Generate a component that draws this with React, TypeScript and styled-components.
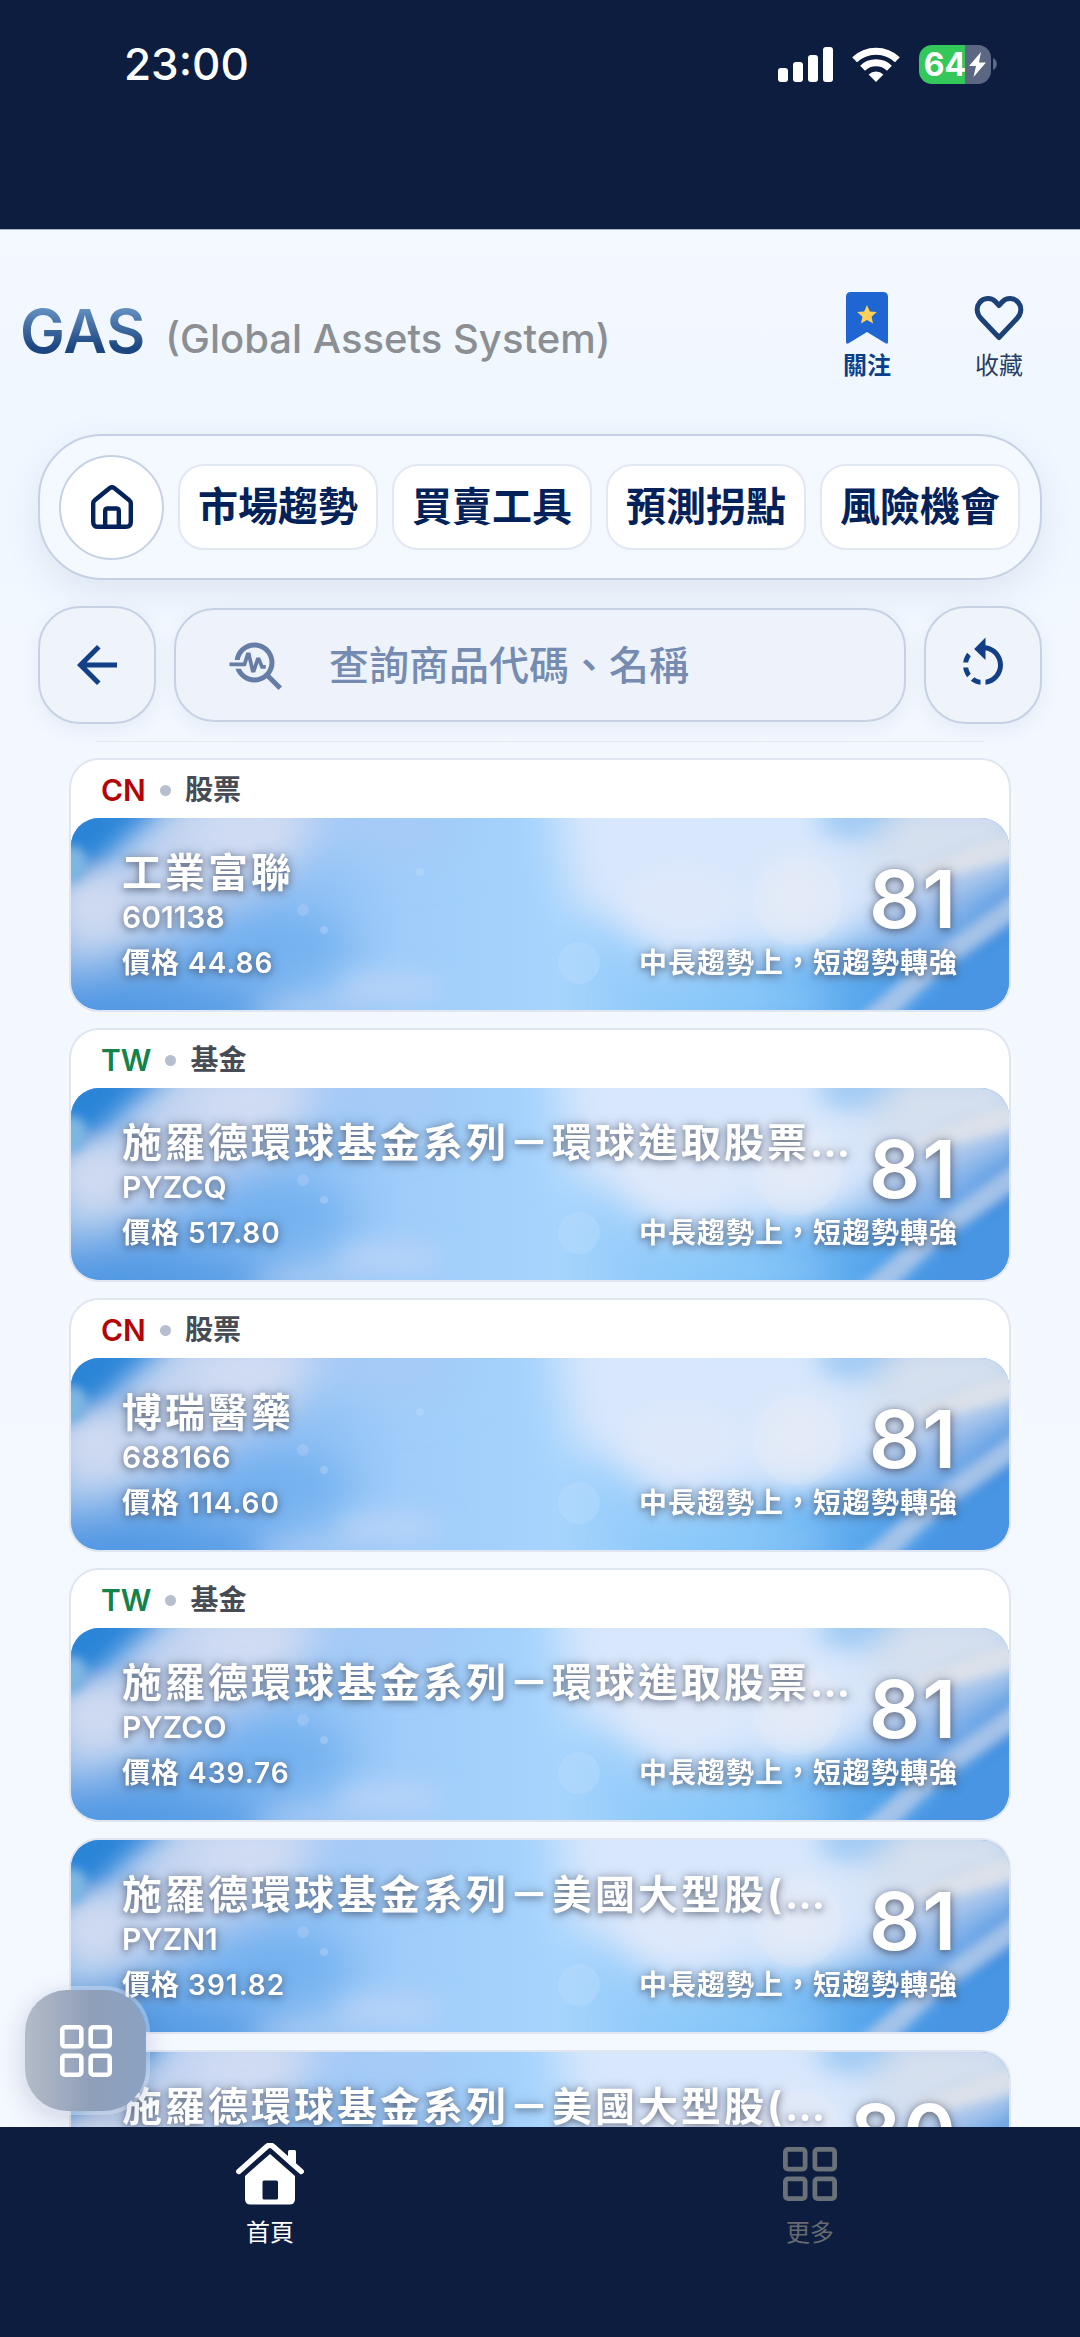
import React from "react";
import styled, { createGlobalStyle } from "styled-components";
import { MdArrowBack, MdRotateLeft, MdTroubleshoot } from "react-icons/md";

const navy = "#0c1d3f";
const ink = "#04225a";
const line = "#c6d1e4";

const GlobalStyle = createGlobalStyle`
  * { box-sizing: border-box; }
  body {
    margin: 0;
    background: ${navy};
    font-family: Inter, "Noto Sans CJK TC", sans-serif;
  }
  button, input { font: inherit; color: inherit; }
  button { padding: 0; border: 0; background: none; cursor: pointer; }
  h1, h2, p, ul { margin: 0; padding: 0; }
  svg { display: block; flex: none; }
`;

const Screen = styled.div`
  display: flex;
  flex-direction: column;
  height: 100vh;
  overflow: hidden;
`;

const StatusBar = styled.div`
  flex: none;
  height: 229px;
  padding: 36px 82px 0 124px;
  display: flex;
  align-items: flex-start;
  justify-content: space-between;
  background: ${navy};
  color: #fff;
`;

const Clock = styled.time`
  font-size: 44px;
  font-weight: 500;
  line-height: 56px;
`;

const StatusIcons = styled.div`
  display: flex;
  align-items: center;
  gap: 19px;
  height: 56px;
`;

const Battery = styled.div`
  display: flex;
  align-items: center;
  gap: 2px;
`;

const BatteryBody = styled.div`
  display: flex;
  align-items: center;
  justify-content: center;
  gap: 3px;
  width: 72px;
  height: 39px;
  border-radius: 13px;
  background: linear-gradient(90deg, #34c759 64%, #5b6783 64%);
  font-size: 32px;
  font-weight: 700;
  line-height: 39px;
`;

const Page = styled.main`
  position: relative;
  flex: 1;
  min-height: 0;
  display: flex;
  flex-direction: column;
  overflow: hidden;
  border-top: 1px solid #a9b3c9;
  background: linear-gradient(180deg, #f4f8ff 0, #f0f7ff 200px, #f3f8ff 520px, #f4f8ff 100%);
`;

const Header = styled.header`
  flex: none;
  display: flex;
  align-items: flex-start;
  justify-content: space-between;
  height: 204px;
  padding: 62px 15px 0 20px;
`;

const Brand = styled.div`
  display: flex;
  align-items: baseline;
  gap: 20px;
  line-height: 78px;
`;

const BrandName = styled.h1`
  font-size: 60px;
  font-weight: 600;
  background: linear-gradient(180deg, #6893c4 14px, #1c4680 56px);
  background-clip: text;
  -webkit-background-clip: text;
  color: transparent;
`;

const BrandNote = styled.p`
  font-size: 40px;
  font-weight: 500;
  color: #8b8f93;
`;

const HeaderActions = styled.div`
  display: flex;
`;

const HeaderAction = styled.button<{ $active?: boolean }>`
  display: flex;
  flex-direction: column;
  align-items: center;
  gap: 8px;
  width: 132px;
  font-size: 24px;
  line-height: 28px;
  font-weight: ${(p) => (p.$active ? 700 : 400)};
  color: ${(p) => (p.$active ? "#0a3f8c" : "#2a3d62")};
`;

const IconSlot = styled.span<{ $size: number }>`
  display: flex;
  align-items: center;
  justify-content: center;
  height: ${(p) => p.$size}px;
`;

const Menu = styled.nav`
  flex: none;
  display: flex;
  align-items: center;
  gap: 14px;
  height: 146px;
  margin: 0 38px 26px;
  padding: 0 20px 0 19px;
  border: 2px solid ${line};
  border-radius: 64px;
  background: #f4f8ff;
  box-shadow: 0 12px 36px rgba(40, 70, 120, 0.1);
`;

const HomeButton = styled.button`
  flex: none;
  display: flex;
  align-items: center;
  justify-content: center;
  width: 105px;
  height: 105px;
  border: 2px solid ${line};
  border-radius: 50%;
  background: #fff;
`;

const MenuChip = styled.button`
  flex: 1;
  min-width: 0;
  height: 86px;
  border: 2px solid #e2e8f3;
  border-radius: 26px;
  background: #fff;
  color: ${ink};
  font-size: 40px;
  font-weight: 700;
  line-height: 60px;
  white-space: nowrap;
`;

const SearchRow = styled.form`
  flex: none;
  display: flex;
  align-items: center;
  gap: 18px;
  margin: 0 38px;
`;

const SquareButton = styled.button`
  flex: none;
  display: flex;
  align-items: center;
  justify-content: center;
  width: 118px;
  height: 118px;
  border: 2px solid ${line};
  border-radius: 42px;
  background: #eff4fb;
  color: #123f85;
  box-shadow: 0 6px 20px rgba(40, 70, 120, 0.07);
`;

const SearchBox = styled.label`
  flex: 1;
  min-width: 0;
  display: flex;
  align-items: center;
  gap: 42px;
  height: 114px;
  padding: 0 51px;
  border: 2px solid ${line};
  border-radius: 40px;
  background: #eef3fb;
  color: #667da5;
  box-shadow: 0 6px 20px rgba(40, 70, 120, 0.07);
`;

const SearchInput = styled.input`
  flex: 1;
  min-width: 0;
  height: 60px;
  padding: 0;
  border: 0;
  outline: 0;
  background: none;
  font-size: 40px;
  font-weight: 500;
  &::placeholder { color: #768bb0; opacity: 1; }
`;

const Rule = styled.hr`
  flex: none;
  width: calc(100% - 190px);
  height: 1px;
  margin: 17px auto 16px;
  border: 0;
  background: #e3e9f3;
`;

const CardList = styled.ul`
  flex: 1;
  min-height: 0;
  display: flex;
  flex-direction: column;
  gap: 16px;
  padding: 0 69px;
  overflow: hidden;
  list-style: none;
`;

const Card = styled.li`
  flex: none;
  border: 2px solid #dfe6f1;
  border-radius: 30px;
  background: #fff;
`;

const CardHead = styled.div`
  display: flex;
  align-items: center;
  gap: 14px;
  height: 58px;
  padding: 2px 30px 0;
  line-height: 36px;
`;

const Market = styled.span<{ $code: string }>`
  font-size: 30px;
  font-weight: 600;
  color: ${(p) => (p.$code === "CN" ? "#b30505" : "#12834a")};
`;

const Dot = styled.span`
  width: 11px;
  height: 11px;
  border-radius: 50%;
  background: #b5bfcf;
`;

const Kind = styled.span`
  font-size: 28px;
  font-weight: 700;
  color: #474c54;
`;

const Banner = styled.div`
  position: relative;
  height: 192px;
  padding: 31px 51px 29px;
  border-radius: 28px;
  overflow: hidden;
  color: #fff;
  text-shadow: 0 2px 6px rgba(58, 66, 84, 0.55), 0 1px 12px rgba(58, 66, 84, 0.4);
`;

const SkyArt = styled.svg`
  position: absolute;
  inset: 0;
  width: 100%;
  height: 100%;
`;

const BannerRow = styled.div`
  position: relative;
  display: flex;
  align-items: flex-end;
  justify-content: space-between;
  gap: 16px;
  & + & { margin-top: 10px; }
`;

const Names = styled.div`
  min-width: 0;
  display: flex;
  flex-direction: column;
  gap: 2px;
`;

const Title = styled.h2`
  font-size: 40px;
  font-weight: 700;
  line-height: 48px;
  letter-spacing: 3px;
  white-space: nowrap;
`;

const Code = styled.p`
  font-size: 30px;
  font-weight: 600;
  line-height: 36px;
`;

const Score = styled.strong`
  font-size: 80px;
  font-weight: 600;
  line-height: 72px;
  letter-spacing: 2px;
`;

const Detail = styled.p`
  font-size: 28px;
  font-weight: 600;
  line-height: 36px;
  letter-spacing: 1px;
  white-space: nowrap;
`;

const FloatingButton = styled.button`
  position: absolute;
  left: 25px;
  bottom: 16px;
  display: flex;
  align-items: center;
  justify-content: center;
  width: 121px;
  height: 121px;
  border-radius: 42px;
  background: linear-gradient(90deg, #b4bbc8 0%, #8f9fb8 55%, #8aa2c3 100%);
  color: #fff;
  box-shadow: 0 0 0 4px rgba(225, 233, 245, 0.4), 0 8px 28px rgba(30, 50, 90, 0.2);
`;

const TabBar = styled.nav`
  flex: none;
  display: grid;
  grid-template-columns: 1fr 1fr;
  align-items: start;
  height: 210px;
  padding-top: 16px;
  background: ${navy};
`;

const Tab = styled.button<{ $active?: boolean }>`
  display: flex;
  flex-direction: column;
  align-items: center;
  gap: 14px;
  font-size: 24px;
  line-height: 28px;
  font-weight: 400;
  color: ${(p) => (p.$active ? "#fff" : "#676b70")};
`;

const SignalIcon = () => (
  <svg width="55" height="35" viewBox="0 0 55 35" fill="#fff" aria-hidden="true">
    <rect x="0" y="21" width="10" height="14" rx="3" />
    <rect x="15" y="15" width="10" height="20" rx="3" />
    <rect x="30" y="8" width="10" height="27" rx="3" />
    <rect x="45" y="0" width="10" height="35" rx="3" />
  </svg>
);

const WifiIcon = () => (
  <svg width="48" height="35" viewBox="0 0 48 35" aria-hidden="true">
    <g fill="none" stroke="#fff" strokeWidth="7">
      <path d="M2.6 12.8 A31 31 0 0 1 45.4 12.8" />
      <path d="M10.6 21.2 A19.4 19.4 0 0 1 37.4 21.2" />
    </g>
    <path d="M24 35 L16.6 27.4 A10.6 10.6 0 0 1 31.4 27.4 Z" fill="#fff" />
  </svg>
);

const BoltIcon = () => (
  <svg width="17" height="25" viewBox="0 0 17 25" fill="#fff" aria-hidden="true">
    <path d="M12 0 L0 14 H7 L4.5 25 L17 10.5 H10 Z" />
  </svg>
);

const BatteryNub = () => (
  <svg width="5" height="12" viewBox="0 0 5 12" fill="#5b6783" aria-hidden="true">
    <path d="M0 0 A6.6 6.6 0 0 1 0 12 Z" />
  </svg>
);

const BookmarkIcon = () => (
  <svg width="42" height="52" viewBox="0 0 42 52" aria-hidden="true">
    <path d="M5 0 H37 Q42 0 42 5 V50 Q42 53 39 51 L21 40 L3 51 Q0 53 0 50 V5 Q0 0 5 0 Z" fill="#1f66d2" />
    <path d="M21 13 L23.8 19.4 L30.8 20.1 L25.5 24.7 L27.1 31.5 L21 27.9 L14.9 31.5 L16.5 24.7 L11.2 20.1 L18.2 19.4 Z" fill="#ffd15a" />
  </svg>
);

const HeartIcon = () => (
  <svg width="50" height="46" viewBox="0 0 50 46" fill="none" stroke="#1c4176" strokeWidth="5" strokeLinejoin="round" aria-hidden="true">
    <path d="M25 42.5 L7 23.5 C2.4 18.6 2 12 5.6 7.6 C9.8 2.4 17.4 2.3 21.6 6.8 L25 10.5 L28.4 6.8 C32.6 2.3 40.2 2.4 44.4 7.6 C48 12 47.6 18.6 43 23.5 Z" />
  </svg>
);

const HomeOutline = () => (
  <svg width="42" height="44" viewBox="0 0 42 44" fill="none" stroke={ink} strokeWidth="4.4" strokeLinejoin="round" aria-hidden="true">
    <path d="M2.2 18.5 Q2.2 16.5 4 15 L18.5 3.2 Q21 1.4 23.5 3.2 L38 15 Q39.8 16.5 39.8 18.5 V37 Q39.8 41.8 35 41.8 H7 Q2.2 41.8 2.2 37 Z" />
    <path d="M14.2 41.8 V26 Q14.2 23.5 16.7 23.5 H25.3 Q27.8 23.5 27.8 26 V41.8" />
  </svg>
);

const GridIcon = ({ size, color }: { size: number; color: string }) => (
  <svg width={size} height={size} viewBox="0 0 52 52" fill="none" stroke={color} strokeWidth="4.6" aria-hidden="true">
    <rect x="2.3" y="2.3" width="19" height="19" rx="2.6" />
    <rect x="30.7" y="2.3" width="19" height="19" rx="2.6" />
    <rect x="2.3" y="30.7" width="19" height="19" rx="2.6" />
    <rect x="30.7" y="30.7" width="19" height="19" rx="2.6" />
  </svg>
);

const HomeSolid = () => (
  <svg width="68" height="62" viewBox="0 0 68 62" aria-hidden="true">
    <path d="M52 20 V8.5 Q52 7 53.5 7 H58.5 Q60 7 60 8.5 V27 Z" fill="#fff" />
    <path d="M2.8 28.5 L31 3.4 Q34 1 37 3.4 L65.2 28.5" fill="none" stroke="#fff" strokeWidth="5.4" strokeLinecap="round" />
    <path fillRule="evenodd" d="M34 11 L59 33 V56 Q59 61.5 53.5 61.5 H14.5 Q9 61.5 9 56 V33 Z M28 37.5 Q26.5 37.5 26.5 39 V55 Q26.5 56.5 28 56.5 H40.5 Q42 56.5 42 55 V39 Q42 37.5 40.5 37.5 Z" fill="#fff" />
  </svg>
);

const HiddenDefs = styled.svg`
  position: absolute;
`;

const SkyDefs = () => (
  <HiddenDefs width="0" height="0" aria-hidden="true">
    <defs>
      <linearGradient id="sky-base" x1="0" y1="0" x2="1" y2="0">
        <stop offset="0" stopColor="#4f99e3" />
        <stop offset="0.2" stopColor="#82b8f1" />
        <stop offset="0.35" stopColor="#9fccfa" />
        <stop offset="0.52" stopColor="#a6d4fd" />
        <stop offset="0.72" stopColor="#7dc0f7" />
        <stop offset="0.88" stopColor="#4fa0ea" />
        <stop offset="1" stopColor="#3f8ddf" />
      </linearGradient>
      <filter id="sky-soft" x="-50%" y="-50%" width="200%" height="200%">
        <feGaussianBlur stdDeviation="20" />
      </filter>
      <filter id="sky-mid" x="-50%" y="-50%" width="200%" height="200%">
        <feGaussianBlur stdDeviation="12" />
      </filter>
      <filter id="sky-fine" x="-20%" y="-20%" width="140%" height="140%">
        <feGaussianBlur stdDeviation="5" />
      </filter>
    </defs>
  </HiddenDefs>
);

const Sky = () => (
  <SkyArt viewBox="0 0 938 192" preserveAspectRatio="none" aria-hidden="true">
    <rect width="938" height="192" fill="url(#sky-base)" />
    <g filter="url(#sky-soft)">
      <path d="M-20 60 L50 30 L100 -30 H260 L230 50 L150 90 L80 130 L-20 160 Z" fill="#c3d4f0" />
      <ellipse cx="180" cy="10" rx="60" ry="34" fill="#d2ddf3" />
      <ellipse cx="315" cy="10" rx="80" ry="36" fill="#a6cbf7" />
      <ellipse cx="200" cy="128" rx="80" ry="30" fill="#72b0ef" />
      <ellipse cx="90" cy="194" rx="130" ry="20" fill="#4f97e3" />
      <path d="M480 -40 H760 L800 20 L860 10 L850 80 L790 128 L690 138 L600 150 L550 110 L500 90 Z" fill="#d8e7fc" />
      <path d="M810 -30 H960 V46 L860 76 L790 60 Z" fill="#d6e0ef" />
      <path d="M780 116 L900 52 L960 50 L850 150 Z" fill="#8ab5ea" />
    </g>
    <g filter="url(#sky-mid)">
      <path d="M-20 -20 H100 L56 12 L30 40 L-20 62 Z" fill="#2a84d7" />
      <ellipse cx="25" cy="88" rx="30" ry="26" fill="#cfdaf0" />
      <ellipse cx="320" cy="170" rx="54" ry="16" fill="#b5d3f8" />
      <ellipse cx="240" cy="190" rx="60" ry="10" fill="#a9caf4" />
      <ellipse cx="774" cy="4" rx="28" ry="14" fill="#9dc9f4" />
      <ellipse cx="610" cy="84" rx="60" ry="36" fill="#dfe9fb" opacity="0.8" />
      <circle cx="727" cy="80" r="42" fill="#e3eaf7" opacity="0.8" />
      <ellipse cx="650" cy="182" rx="110" ry="16" fill="#8fcbfa" opacity="0.6" />
    </g>
    <g filter="url(#sky-fine)">
      <path d="M950 108 L950 204 H832 L874 168 Z" fill="#4895e3" />
      <path d="M782 204 L860 136 L950 70 V98 L874 150 L818 204 Z" fill="#b3c9e9" opacity="0.85" />
      <path d="M840 52 L950 12 V38 L860 62 Z" fill="#e0e3e8" opacity="0.8" />
      <ellipse cx="2" cy="46" rx="14" ry="18" fill="#7db6e2" />
    </g>
    <circle cx="727" cy="83" r="44" fill="#eceff7" opacity="0.2" />
    <circle cx="508" cy="145" r="21" fill="#c6e1fc" opacity="0.3" />
    <circle cx="349" cy="54" r="4" fill="#b8d9f7" opacity="0.5" />
    <circle cx="232" cy="92" r="6" fill="#b4d0f4" opacity="0.4" />
    <circle cx="253" cy="112" r="4" fill="#b4d0f4" opacity="0.5" />
  </SkyArt>
);

type Item = {
  market?: string;
  kind?: string;
  title: string;
  code?: string;
  price?: string;
  score: number;
};

const items: Item[] = [
  { market: "CN", kind: "股票", title: "工業富聯", code: "601138", price: "44.86", score: 81 },
  { market: "TW", kind: "基金", title: "施羅德環球基金系列－環球進取股票…", code: "PYZCQ", price: "517.80", score: 81 },
  { market: "CN", kind: "股票", title: "博瑞醫藥", code: "688166", price: "114.60", score: 81 },
  { market: "TW", kind: "基金", title: "施羅德環球基金系列－環球進取股票…", code: "PYZCO", price: "439.76", score: 81 },
  { title: "施羅德環球基金系列－美國大型股(…", code: "PYZN1", price: "391.82", score: 81 },
  { title: "施羅德環球基金系列－美國大型股(…", score: 80 },
];

const menu = ["市場趨勢", "買賣工具", "預測拐點", "風險機會"];

const ProductCard = ({ item }: { item: Item }) => (
  <Card>
    {item.market && (
      <CardHead>
        <Market $code={item.market}>{item.market}</Market>
        <Dot />
        <Kind>{item.kind}</Kind>
      </CardHead>
    )}
    <Banner>
      <Sky />
      <BannerRow>
        <Names>
          <Title>{item.title}</Title>
          <Code>{item.code ?? "\u00a0"}</Code>
        </Names>
        <Score>{item.score}</Score>
      </BannerRow>
      {item.price && (
        <BannerRow>
          <Detail>價格 {item.price}</Detail>
          <Detail>中長趨勢上，短趨勢轉強</Detail>
        </BannerRow>
      )}
    </Banner>
  </Card>
);

export default function App() {
  return (
    <Screen lang="zh-Hant">
      <GlobalStyle />
      <SkyDefs />
      <StatusBar>
        <Clock>23:00</Clock>
        <StatusIcons>
          <SignalIcon />
          <WifiIcon />
          <Battery>
            <BatteryBody>
              64
              <BoltIcon />
            </BatteryBody>
            <BatteryNub />
          </Battery>
        </StatusIcons>
      </StatusBar>
      <Page>
        <Header>
          <Brand>
            <BrandName>GAS</BrandName>
            <BrandNote>(Global Assets System)</BrandNote>
          </Brand>
          <HeaderActions>
            <HeaderAction type="button" $active>
              <IconSlot $size={52}><BookmarkIcon /></IconSlot>
              關注
            </HeaderAction>
            <HeaderAction type="button">
              <IconSlot $size={52}><HeartIcon /></IconSlot>
              收藏
            </HeaderAction>
          </HeaderActions>
        </Header>
        <Menu>
          <HomeButton type="button" aria-label="首頁"><HomeOutline /></HomeButton>
          {menu.map((label) => (
            <MenuChip type="button" key={label}>{label}</MenuChip>
          ))}
        </Menu>
        <SearchRow onSubmit={(e) => e.preventDefault()}>
          <SquareButton type="button" aria-label="返回"><MdArrowBack size={60} /></SquareButton>
          <SearchBox>
            <MdTroubleshoot size={60} />
            <SearchInput type="text" aria-label="查詢商品代碼、名稱" placeholder="查詢商品代碼、名稱" />
          </SearchBox>
          <SquareButton type="reset" aria-label="重設"><MdRotateLeft size={60} /></SquareButton>
        </SearchRow>
        <Rule />
        <CardList>
          {items.map((item, i) => (
            <ProductCard key={i} item={item} />
          ))}
        </CardList>
        <FloatingButton type="button" aria-label="功能選單"><GridIcon size={52} color="#fff" /></FloatingButton>
      </Page>
      <TabBar>
        <Tab type="button" $active>
          <IconSlot $size={62}><HomeSolid /></IconSlot>
          首頁
        </Tab>
        <Tab type="button">
          <IconSlot $size={62}><GridIcon size={54} color="#6b7178" /></IconSlot>
          更多
        </Tab>
      </TabBar>
    </Screen>
  );
}
